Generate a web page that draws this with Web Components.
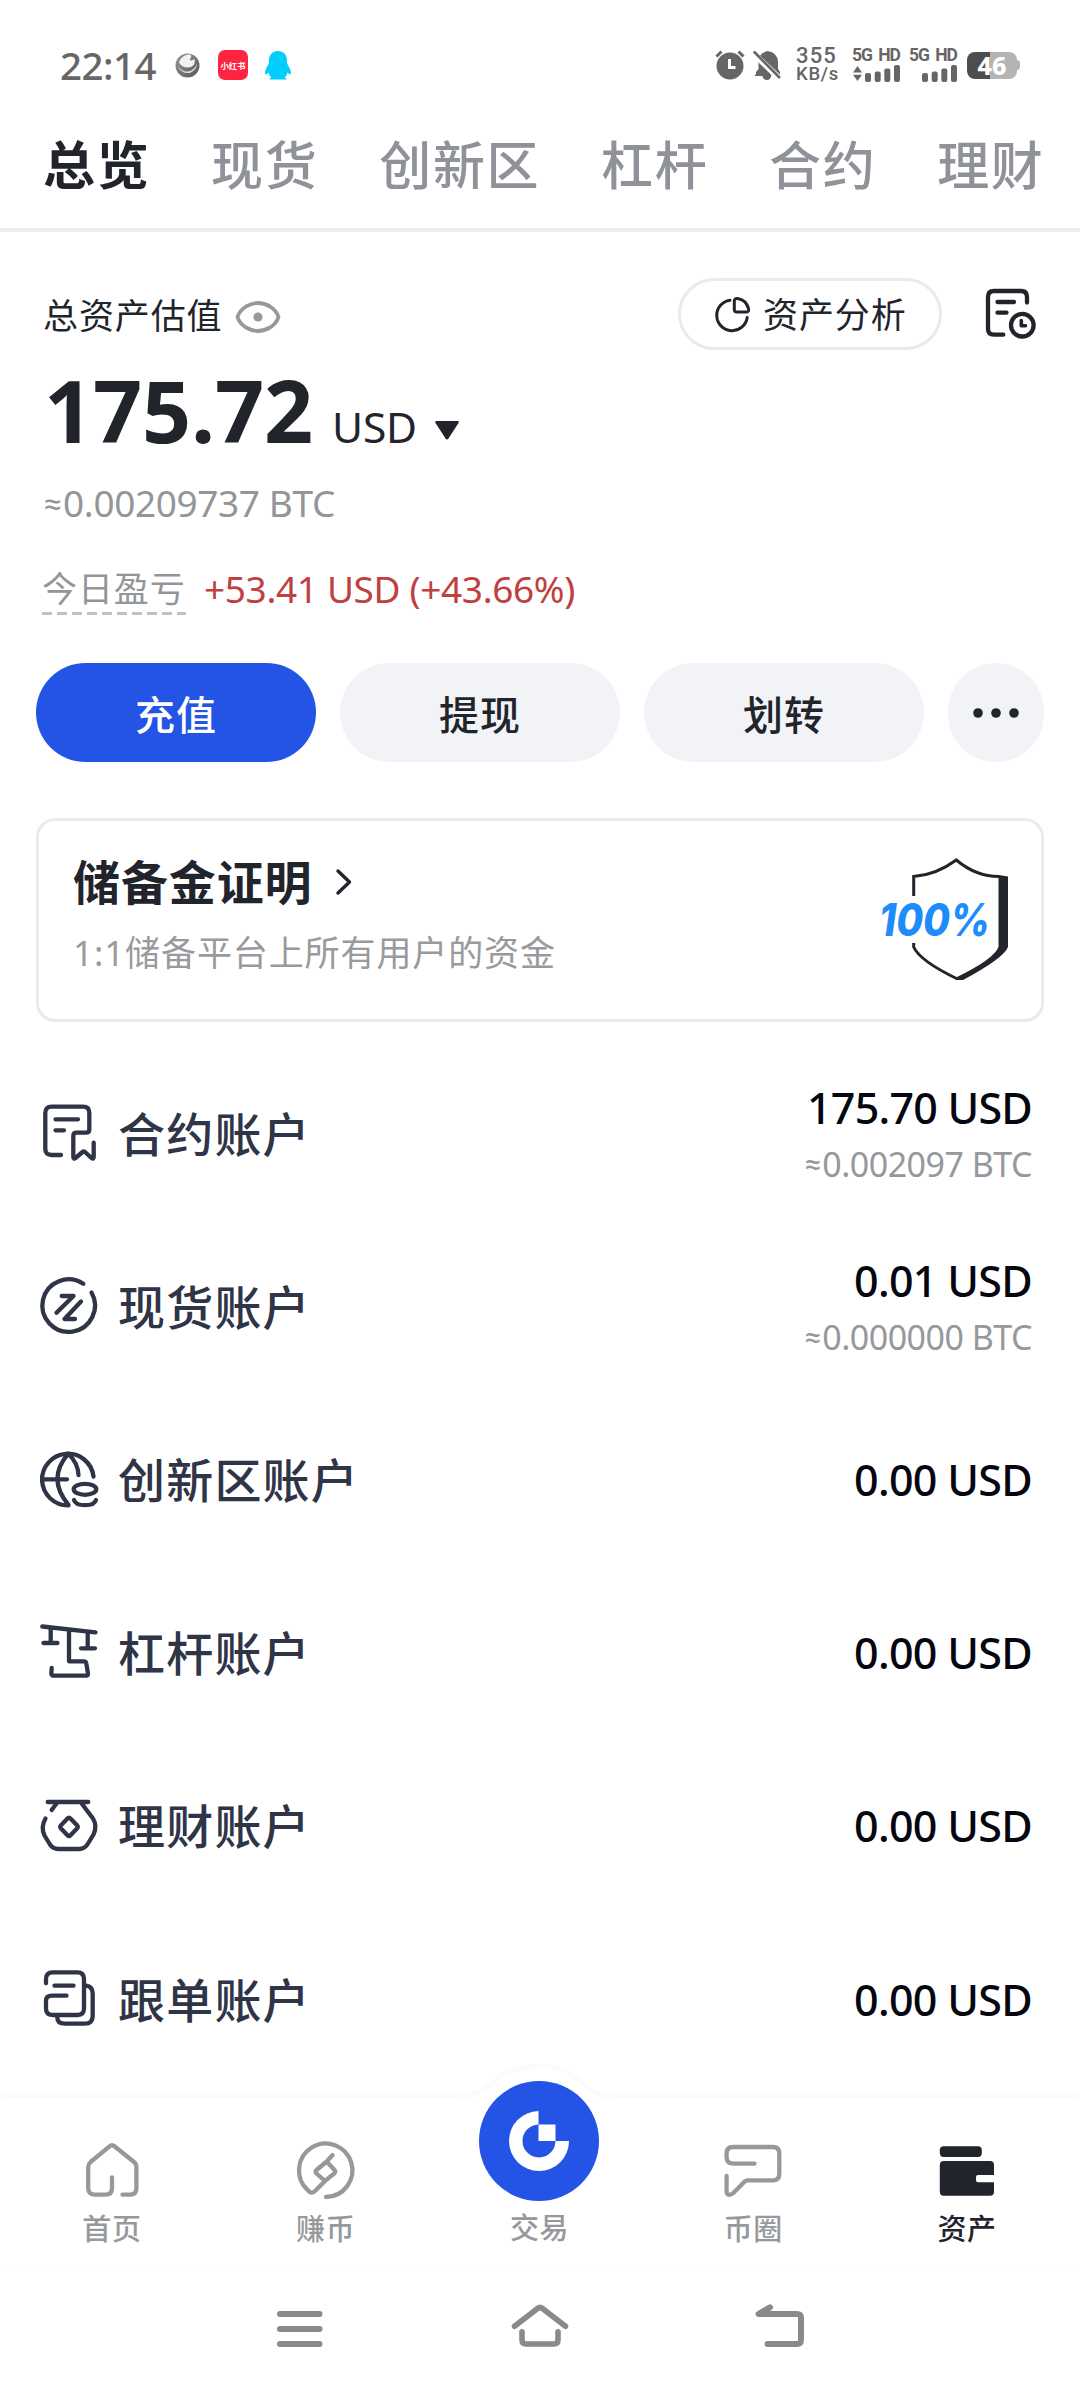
<!DOCTYPE html>
<html lang="zh-CN">
<head>
<meta charset="utf-8">
<meta name="viewport" content="width=1080">
<title>资产</title>
<style>
html,body{margin:0;padding:0;background:#fff}
body{width:1080px;height:2392px;overflow:hidden;font-family:"Noto Sans",Lato,"Noto Sans CJK SC",sans-serif;color:#22242c}
</style>
</head>
<body>
<asset-app></asset-app>
<script>
const define = (name, html, setup) => {
  const tpl = document.createElement('template');
  tpl.innerHTML = html;
  customElements.define(name, class extends HTMLElement {
    connectedCallback() {
      if (this.shadowRoot) return;
      this.attachShadow({mode: 'open'}).append(tpl.content.cloneNode(true));
      if (setup) setup(this, this.shadowRoot);
    }
  });
};

/* name: [width, height, stroke width, markup] */
const ICONS = {
  planet: [25,25,0,'<defs><linearGradient id="g" x1="0" y1="0" x2="1" y2="1"><stop offset="0" stop-color="#999"/><stop offset=".5" stop-color="#777"/><stop offset="1" stop-color="#555"/></linearGradient></defs><circle cx="12.5" cy="12.5" r="12" fill="url(#g)"/><path d="M4 9.500Q6 3 13 1.500Q17 1 16 4Q13 10 19.500 6Q21 11 16 14Q8 16 4 9.500Z" fill="#f2f2f2"/><path d="M3 13Q7 19 13 18.500Q19 17.500 22 11Q21.500 17 15 20Q6 21 3 13Z" fill="#ddd"/>'],
  penguin: [26,29,0,'<path fill="#00cffe" d="M13 0C7.500 0 4 4 4 9.500V12C3 14.500 0 18.500 0 22C0 24.500 2 23 3.500 21.500C4 24 5 25.500 6.500 26.500C5 27 4.500 27.500 4.500 28.600H21.500C21.500 27.500 21 27 19.500 26.500C21 25.500 22 24 22.500 21.500C24 23 26 24.500 26 22C26 18.500 23 14.500 22 12V9.500C22 4 18.500 0 13 0Z"/>'],
  alarm: [30,30,0,'<circle cx="15" cy="16" r="13.500" fill="#666"/><path d="M1.500 6.500L6.500 1.500M28.500 6.500L23.500 1.500" stroke="#666" stroke-width="3"/><path d="M14.500 9V17.500H20.500" stroke="#fff" stroke-width="3" fill="none"/>'],
  mute: [28,31,0,'<path fill="#666" d="M3 24V22L5.500 19V11Q6 3.500 14 1Q24.500 2 25 12V19L27 22V24H18.500Q18 30 14 30Q10 30 9.500 26H1.500Z"/><path d="M0 3L27 29" stroke="#fff" stroke-width="6"/><path d="M.8 1.500L27 28" stroke="#666" stroke-width="2.600"/>'],
  bars: [35,17,0,'<g fill="#666"><rect x="0" y="8" width="6" height="9" rx="2"/><rect x="9.700" y="6.500" width="6" height="10.500" rx="2"/><rect x="19.300" y="3.500" width="6" height="13.500" rx="2"/><rect x="29" y="0" width="6" height="17" rx="2"/></g>'],
  updown: [9,17,0,'<path fill="#666" d="M4.500 1L9 7.500H0ZM4.500 16L9 9.800H0Z"/>'],
  eye: [46,34,3.8,'<path d="M2.500 17Q4.500 10.500 11 6.500Q23 -.5 35 6.500Q41.500 10.500 43.500 17Q41.500 23.500 35 27.500Q23 34.500 11 27.500Q4.500 23.500 2.500 17Z"/><circle cx="23" cy="17" r="4.600" fill="currentColor" stroke="none"/>'],
  tri: [24,19,0,'<path fill="currentColor" d="M1.500 0H22.500Q24.500 0 23.500 2L13.500 17.500Q12 19.500 10.500 17.500L.5 2Q-.5 0 1.500 0Z"/>'],
  pie: [37,37,3,'<path d="M16 4.200A15.300 15.300 0 1 0 33.200 21.500"/><path d="M20.300 5.500V13.500Q20.300 16 23 16H32.500Q35.300 16 34.500 12.500Q32 4 23.500 2.600Q20.300 2.300 20.300 5.500Z"/>'],
  record: [54,54,4.3,'<path d="M19.300 48.700H10Q4 48.700 4 43V11Q4 5 10 5H37Q43 5 43 11V16.500M13.500 16H30M13.500 26.700H22.500"/><circle cx="38.300" cy="39.200" r="11.300"/><path d="M37.300 34.500V39.800H41.500" stroke-width="3.600"/>'],
  dots: [46,10,0,'<g fill="currentColor"><circle cx="5" cy="5" r="4.800"/><circle cx="23" cy="5" r="4.800"/><circle cx="41" cy="5" r="4.800"/></g>'],
  chevron: [16,26,3.4,'<path d="M2 2L13.500 13L2 24"/>'],
  contract: [64,64,4.3,'<path d="M24 54H14.500Q8.300 54 8.300 48V12Q8.300 5.700 14.500 5.700H46Q52.300 5.700 52.300 12V28.500Q52.300 31.700 49 31.700H39.500Q36.300 31.700 36.300 35V56Q36.500 58.500 38.500 57L45.500 51Q46.700 50 48 51L54.500 57Q56.700 58.500 56.700 56V41.700M18.500 18.300H41M18.500 29.300H27"/>'],
  spot: [64,64,4.3,'<path d="M46.300 9.700A26.300 26.300 0 1 0 54.500 18.500M24.700 22H36.500L19.500 38.700M44 27.500L27.500 45H38"/>'],
  innovation: [64,64,4.3,'<path d="M31.500 58.300A25.800 25.800 0 1 1 56.500 29.500M5.700 32.300H30M31.300 6.700Q9.500 32 31.500 57.800M31.300 6.700Q41 16 41.500 28"/><ellipse cx="48" cy="42.300" rx="11.300" ry="5.500"/><path d="M37 53Q38.500 58.200 48 58.200Q57.500 58.200 59 53"/>'],
  lever: [64,64,4.3,'<path d="M5.300 6.500L58.500 12.300M13.700 8V23M6.500 23H20.500M50.700 12V28.300M44 28.300H58M32 10.700V41.300H47Q49 41.300 49.300 43.500L51 53.500Q51 55.700 49 55.700H17Q14.500 55.700 14.300 53.500L14.700 48"/>'],
  finance: [64,64,4.3,'<path d="M10.700 9H51.300M19.500 10.500L14.700 17M44.700 10.500L56 25.500Q60.500 33 56.500 41.500L51 50.500Q48 56 42 56H21.500Q16 56 13 51.500L7.500 42.500Q3.500 34 8.500 25.500M30.500 25.500Q32 24 33.500 25.500L40 32.200Q41.500 34 40 35.500L33.500 42.200Q32 43.700 30.500 42.200L24 35.500Q22.500 34 24 32.200Z"/>'],
  copy: [64,64,4.3,'<path d="M9 16.300V12Q9 5.300 15.500 5.300H40.500Q47 5.300 47 12V41.500Q47 48 40.500 48H15.500Q9 48 9 41.500V34Q9 28.700 15 28.700H29.500M17.500 18.700H36.500M49 18.700Q55.700 19.500 55.700 26.500V49Q55.700 56.700 48 56.700H28Q20.300 56.700 20.300 50.500"/>'],
  home: [64,64,4.3,'<path d="M32 39.500V50Q32 56.700 25.500 56.700H15Q8.200 56.700 8.200 50V29Q8.200 26 10.500 24L29.500 8.300Q32 6.300 34.500 8.300L54 24Q56.400 26 56.400 29V50Q56.400 56.700 50 56.700H42.500"/>'],
  earn: [64,64,4.3,'<path d="M32 59A26.700 26.700 0 1 0 14 52.300Q17.300 56.500 21 53L31 43L40.300 35.400Q42 33.700 40.500 32L32.700 23.500L38.600 17M32.700 23.500L22.500 32Q20.800 33.700 22.500 35.500L31 43"/>'],
  chat: [64,64,4.3,'<path d="M33.500 25.700H13Q5.600 25.700 5.600 19V15.500Q5.600 9 12 9H52Q58.300 9 58.300 15.500V36Q58.300 42.300 52 42.300H26.500Q25 42.300 24 43.300L11.800 55.500Q5.600 59 5.600 53V38"/>'],
  wallet: [64,64,0,'<rect x="4.800" y="8.300" width="42" height="10.700" rx="4" fill="currentColor"/><path fill="currentColor" d="M8.800 23H55Q59 23 59 27V37H43Q41 37 41 39V42.300Q41 44.300 43 44.300H59V53.700Q59 57.700 55 57.700H8.800Q4.800 57.700 4.800 53.700V27Q4.800 23 8.800 23Z"/>'],
  trade: [120,120,0,'<circle cx="60" cy="60" r="60" fill="#2354e6"/><path fill="#fff" d="M59.500 30A30 30 0 1 0 90 60H76.500A16.500 16.500 0 1 1 59.500 43.500Z"/><rect x="59.500" y="43.500" width="17" height="16.500" fill="#fff"/>'],
  sysmenu: [64,64,6,'<path d="M12 17H51.500M12 32H51.500M12 47H51.500"/>'],
  syshome: [64,64,5.6,'<path d="M6.500 29.300L29.500 11.500Q32 9.500 34.500 11.500L57.500 29.300M14 34.700V43Q14 47 18 47H46Q50 47 50 43V34.700"/>'],
  sysback: [64,64,6,'<path d="M22 10.300L10.500 17H49Q53 17 53 21V43Q53 47 49 47H19.500"/>']
};

define('ui-icon', '<style>:host{display:block;flex:none;line-height:0}svg{display:block;overflow:visible}</style>', (el, root) => {
  const [w, h, s, body] = ICONS[el.getAttribute('name')];
  root.innerHTML += `<svg width="${w}" height="${h}" viewBox="0 0 ${w} ${h}" fill="none" ${s ? `stroke="currentColor" stroke-width="${s}" stroke-linecap="round" stroke-linejoin="round"` : ''}>${body}</svg>`;
});

/* Tracks its text so that the line takes exactly the given width. */
define('fit-text', '<style>:host{display:block;white-space:nowrap;flex:none}span{display:inline-block}</style><span><slot></slot></span>', (el, root) => {
  const span = root.querySelector('span');
  const target = +el.getAttribute('w');
  const natural = span.getBoundingClientRect().width;
  el.style.width = target + 'px';
  span.style.letterSpacing = (target - natural) / el.textContent.length + 'px';
});

define('status-bar', `
<style>
:host{display:flex;justify-content:space-between;align-items:center;height:130px;padding:0 60px 0 60px;box-sizing:border-box;color:#666}
.l,.r{display:flex;align-items:center}
.time{font-size:38.500px;font-weight:500;line-height:40px;margin-right:19px}
.xhs{width:30px;height:30px;border-radius:7px;background:#ff2442;color:#fff;font:700 8.300px/30px "Noto Sans CJK SC",sans-serif;text-align:center;margin:0 17px 0 18px;white-space:nowrap}
.speed{margin:0 13px 0 15px;display:flex;flex-direction:column;font-family:Roboto,sans-serif;font-weight:500}
.speed .a{font-size:22px;line-height:19.500px}
.speed .b{font-size:18.500px;line-height:19.500px}
.sig{display:flex;flex-direction:column;gap:3px;font-family:Roboto,sans-serif;font-weight:700;font-size:17.500px;line-height:14px;word-spacing:3px;margin-right:9px}
.sig div{display:flex;justify-content:flex-end;gap:3px}
.bat{display:flex;align-items:center;margin-left:1px}
.body{width:50px;height:27px;border-radius:8px;background:linear-gradient(90deg,#4d4d4d 47%,#b4b4b4 47%);color:#fff;font-weight:800;font-size:25px;line-height:27px;text-align:center}
.tip{width:3px;height:10px;background:#b4b4b4;border-radius:0 3px 3px 0}
</style>
<div class="l"><fit-text class="time" w="96">22:14</fit-text><ui-icon name="planet"></ui-icon><div class="xhs">小红书</div><ui-icon name="penguin"></ui-icon></div>
<div class="r"><ui-icon name="alarm"></ui-icon><ui-icon name="mute" style="margin-left:8px"></ui-icon>
<div class="speed"><fit-text class="a" w="41">355</fit-text><fit-text class="b" w="43">KB/s</fit-text></div>
<div class="sig"><fit-text w="48">5G HD</fit-text><div><ui-icon name="updown"></ui-icon><ui-icon name="bars"></ui-icon></div></div>
<div class="sig"><fit-text w="48">5G HD</fit-text><div><ui-icon name="bars"></ui-icon></div></div>
<div class="bat"><div class="body">46</div><div class="tip"></div></div></div>`);

define('top-tabs', `
<style>
:host{display:flex;gap:60.700px;align-items:flex-start;height:98px;padding-left:43px;border-bottom:4px solid #ededf0;font-size:52px;line-height:70px;letter-spacing:1.700px;color:#8f9298;font-weight:500;overflow:hidden;white-space:nowrap}
::slotted(*){flex:none}
::slotted(.on){color:#22242c;font-weight:700}
</style><slot></slot>`);

define('asset-summary', `
<style>
:host{display:block;padding:46px 42px 0 42px}
.head{display:flex;align-items:center;height:72px}
.label{font-size:35px;letter-spacing:.9px;line-height:40px;padding:4px 0 0 1px}
.eye{color:#96989b;margin:6px auto 0 12px}
.pill{display:flex;align-items:center;box-sizing:border-box;width:264px;height:72px;border:3px solid #e9eaeb;border-radius:36px;padding-left:33px;margin-right:42px;font-size:35px;letter-spacing:.9px;line-height:40px;gap:12px;white-space:nowrap}
.pill span{padding-top:2px}
.rec{margin-bottom:3px}
.total{display:flex;align-items:baseline;height:86px;margin-top:17px;line-height:86px}
.num{font-size:86px;font-weight:700;margin-left:2px}
.cur{font-size:42.500px;margin-left:19px}
.tri{margin-left:18px;align-self:flex-start;margin-top:54px}
.btc{font-size:37px;line-height:40px;margin:30px 0 0 0;color:#939598}
.pnl{display:flex;margin-top:44px;line-height:44px;font-size:35px;color:#939598;white-space:nowrap}
.pnl .t{flex:none;width:144px;box-sizing:border-box;letter-spacing:.9px;height:48px;background:repeating-linear-gradient(90deg,#c0c2c4 0 10px,transparent 10px 15px) 0 100%/100% 3px no-repeat}
.pnl .v{color:#c0403f;font-size:37px;margin-left:18px}
</style>
<div class="head"><span class="label">总资产估值</span><ui-icon class="eye" name="eye"></ui-icon><div class="pill"><ui-icon name="pie"></ui-icon><span>资产分析</span></div><ui-icon class="rec" name="record"></ui-icon></div>
<div class="total"><fit-text class="num" w="269">175.72</fit-text><fit-text class="cur" w="85">USD</fit-text><ui-icon class="tri" name="tri"></ui-icon></div>
<fit-text class="btc" w="293">≈0.00209737 BTC</fit-text>
<div class="pnl"><span class="t">今日盈亏</span><fit-text class="v" w="371">+53.41 USD (+43.66%)</fit-text></div>`);

define('action-row', `
<style>
:host{display:flex;gap:24px;margin:48px 36px 0}
::slotted(*),b{display:flex;align-items:center;justify-content:center;flex:1;height:99px;border-radius:50px;background:#f1f3f6;font-size:40px;letter-spacing:1px;font-weight:500}
::slotted(.primary){background:#2354e6;color:#fff}
b{flex:0 0 96px}
</style><slot></slot><b><ui-icon name="dots"></ui-icon></b>`);

define('reserve-card', `
<style>
:host{display:flex;justify-content:space-between;box-sizing:border-box;margin:56px 36px 0 36px;height:204px;border:3px solid #ebebec;border-radius:19px;padding:33px 29px 0 34px}
h2{display:flex;align-items:center;gap:23px;margin:0;font-size:47px;line-height:56px;letter-spacing:.9px;font-weight:700}
p{margin:21px 0 0;font-size:35px;line-height:44px;letter-spacing:.9px;color:#989a9d;white-space:nowrap}
svg{display:block;margin-top:1px}
text{font:italic 800 45px Inter,Roboto,sans-serif}
</style>
<div><h2>储备金证明<ui-icon name="chevron"></ui-icon></h2><p>1:1储备平台上所有用户的资金</p></div>
<svg width="132" height="130" viewBox="0 0 132 130"><path d="M33.700 41V21.500Q56 20 76.300 5Q96 21.500 119 21.500M33.700 88V92Q40 106 77.500 124" fill="none" stroke="#22242c" stroke-width="3"/><path fill="#22242c" d="M118.500 20L128 21.500V92Q124 103 83 125H77L76 122.500Q114 104 118.500 92Z"/><text x="-1" y="81" fill="#1e8cfb" textLength="111" lengthAdjust="spacingAndGlyphs">100%</text></svg>`);

define('account-item', `
<style>
:host{display:flex;align-items:center;height:173.200px;padding:0 48px 0 37px;box-sizing:border-box;color:#2f3447}
.n{font-size:47px;letter-spacing:1.200px;line-height:60px;font-weight:500;margin:2px auto 0 17px}
.a{display:flex;flex-direction:column;align-items:flex-end;padding-top:2px}
</style><span class="i" style="display:contents"></span><span class="n"></span><div class="a"><slot></slot></div>`, (el, root) => {
  root.querySelector('.i').innerHTML = `<ui-icon name="${el.getAttribute('icon')}"></ui-icon>`;
  root.querySelector('.n').textContent = el.getAttribute('name');
});

const row = (icon, name, value, w, sub) => `
<account-item icon="${icon}" name="${name}"><fit-text class="v" w="${w}">${value}</fit-text>${sub ? `<fit-text class="s" w="229">${sub}</fit-text>` : ''}</account-item>`;

define('account-list', `
<style>
:host{display:block;margin-top:24px}
.v{font-size:43px;line-height:50px;color:#05060f;font-weight:500}
.s{font-size:34px;line-height:42px;color:#96989b;margin:10px 0 0}
</style>
${row('contract','合约账户','175.70 USD',225,'≈0.002097 BTC')}
${row('spot','现货账户','0.01 USD',178,'≈0.000000 BTC')}
${row('innovation','创新区账户','0.00 USD',178)}
${row('lever','杠杆账户','0.00 USD',178)}
${row('finance','理财账户','0.00 USD',178)}
${row('copy','跟单账户','0.00 USD',178)}`);

define('tab-item', `
<style>
:host{display:flex;flex-direction:column;align-items:center;flex:1;padding-top:40px;font-size:29px;letter-spacing:.6px;line-height:36px;color:#96999c;font-weight:500}
:host([on]){color:#22242c}
:host([center]){padding-top:0}
:host([center]) .i{margin-top:-17px}
.t{margin-top:9px}
</style><div class="i"></div><span class="t"><slot></slot></span>`, (el, root) => {
  root.querySelector('.i').innerHTML = `<ui-icon name="${el.getAttribute('icon')}"></ui-icon>`;
});

define('tab-bar', `
<style>
:host{display:flex;position:relative;box-sizing:border-box;height:168px;padding:0 6px 0 5px;background:#fff;box-shadow:0 -3px 8px rgba(60,70,90,.03)}
.bump{position:absolute;left:434px;top:-36px}
slot{display:flex;flex:1;position:relative}
::slotted(*){position:relative}
</style>
<svg class="bump" width="200" height="60" viewBox="0 0 200 60"><path d="M20 36Q42 36 56 22Q76 4 105 4Q132 4 150 22Q162 36 184 36V60H20Z" fill="#fff"/><path d="M26 35Q44 34 57 22Q76 4 105 4Q132 4 149 22Q160 34 180 35" fill="none" stroke="#fbfbfb" stroke-width="4"/></svg>
<slot></slot>`);

define('system-nav', `
<style>:host{display:flex;justify-content:center;gap:176px;height:126px;padding-top:31px;box-sizing:border-box;color:#8a8a8a}</style>
<ui-icon name="sysmenu"></ui-icon><ui-icon name="syshome"></ui-icon><ui-icon name="sysback"></ui-icon>`);

define('asset-app', `
<style>:host{display:flex;flex-direction:column;width:1080px;height:2392px;background:#fff}main{flex:1;min-height:0}</style>
<status-bar></status-bar>
<top-tabs><span class="on">总览</span><span>现货</span><span>创新区</span><span>杠杆</span><span>合约</span><span>理财</span></top-tabs>
<main>
<asset-summary></asset-summary>
<action-row><span class="primary">充值</span><span>提现</span><span>划转</span></action-row>
<reserve-card></reserve-card>
<account-list></account-list>
</main>
<tab-bar><tab-item icon="home">首页</tab-item><tab-item icon="earn">赚币</tab-item><tab-item icon="trade" center>交易</tab-item><tab-item icon="chat">币圈</tab-item><tab-item icon="wallet" on>资产</tab-item></tab-bar>
<system-nav></system-nav>`);
</script>
</body>
</html>
